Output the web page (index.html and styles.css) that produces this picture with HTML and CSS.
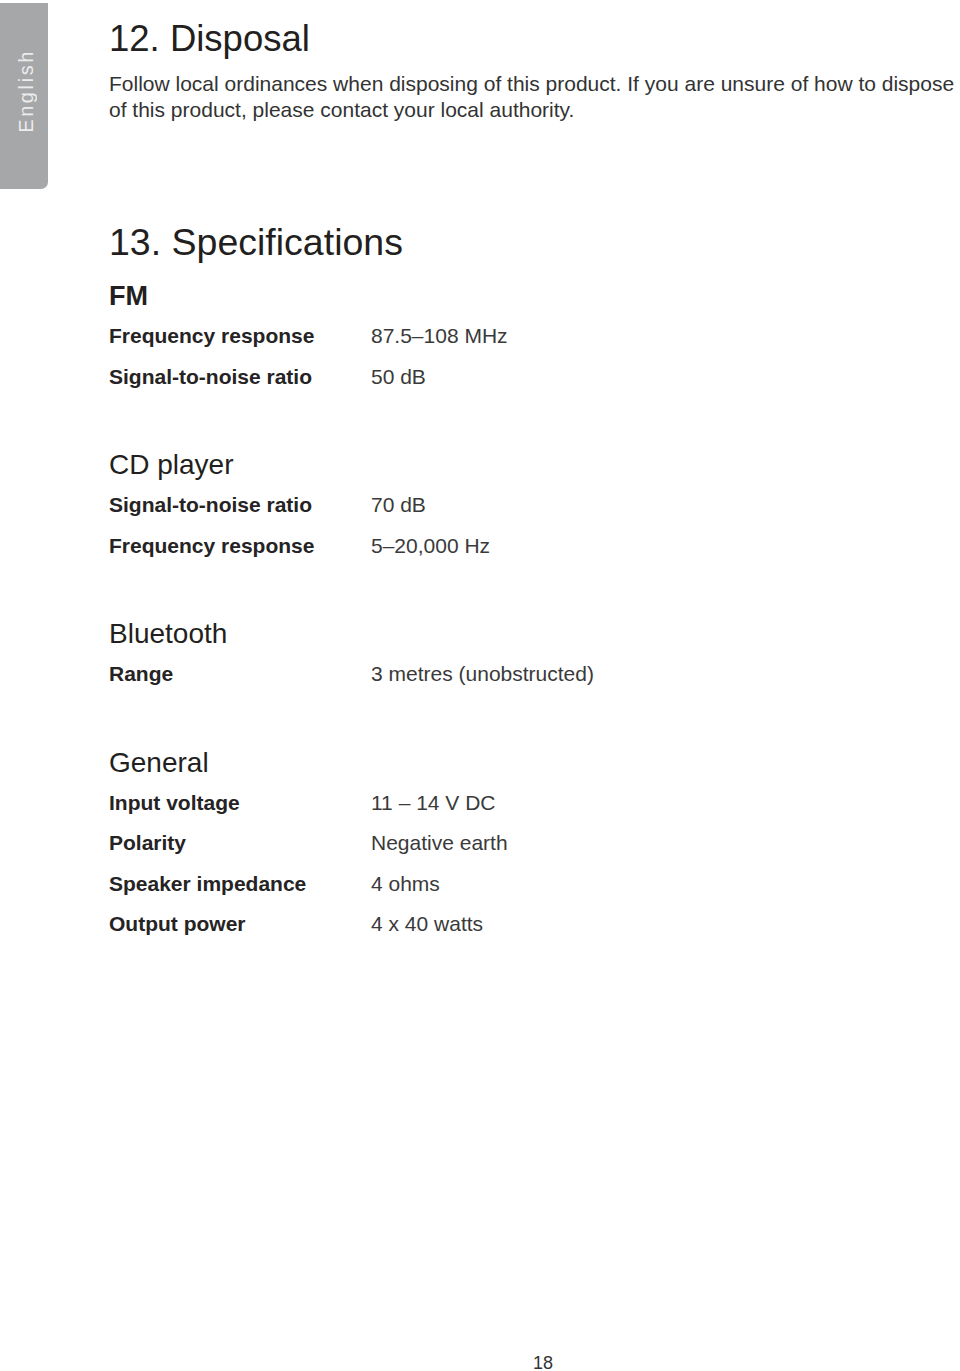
FILE: index.html
```html
<!DOCTYPE html>
<html lang="en">
<head>
<meta charset="utf-8">
<title>Disposal and Specifications</title>
<link rel="stylesheet" href="styles.css">
</head>
<body>
<div class="page">
  <div class="layout">
    <aside class="tab"><span class="tab-label">English</span></aside>
    <main class="content">
      <section class="disposal">
        <h1 class="title">12. Disposal</h1>
        <p class="para">Follow local ordinances when disposing of this product. If you are unsure of how to dispose of this product, please contact your local authority.</p>
      </section>
      <section class="specs">
        <h1 class="title">13. Specifications</h1>
        <div class="group">
          <h2 class="group-title group-title-first">FM</h2>
          <dl class="rows">
            <dt>Frequency response</dt><dd>87.5–108 MHz</dd>
            <dt>Signal-to-noise ratio</dt><dd>50 dB</dd>
          </dl>
        </div>
        <div class="group">
          <h2 class="group-title">CD player</h2>
          <dl class="rows">
            <dt>Signal-to-noise ratio</dt><dd>70 dB</dd>
            <dt>Frequency response</dt><dd>5–20,000 Hz</dd>
          </dl>
        </div>
        <div class="group">
          <h2 class="group-title">Bluetooth</h2>
          <dl class="rows">
            <dt>Range</dt><dd>3 metres (unobstructed)</dd>
          </dl>
        </div>
        <div class="group">
          <h2 class="group-title">General</h2>
          <dl class="rows">
            <dt>Input voltage</dt><dd>11 – 14 V DC</dd>
            <dt>Polarity</dt><dd>Negative earth</dd>
            <dt>Speaker impedance</dt><dd>4 ohms</dd>
            <dt>Output power</dt><dd>4 x 40 watts</dd>
          </dl>
        </div>
      </section>
    </main>
  </div>
  <footer class="page-number">18</footer>
</div>
</body>
</html>
```

FILE: styles.css
```css
* { box-sizing: border-box; }
html, body { margin: 0; padding: 0; background: #fff; overflow: hidden; }
body {
  font-family: "Liberation Sans", Arial, sans-serif;
  color: #231f20;
}
.page {
  width: 960px;
  min-height: 1371px;
  display: flex;
  flex-direction: column;
}
.layout {
  display: flex;
  align-items: flex-start;
}
.tab {
  width: 48px;
  height: 186px;
  margin-top: 3px;
  background: #a6a7a9;
  border-bottom-right-radius: 7px;
  display: flex;
  align-items: center;
  justify-content: center;
  padding-bottom: 10px;
  flex-shrink: 0;
}
.tab-label {
  writing-mode: vertical-rl;
  transform: rotate(180deg);
  color: #ececec;
  font-size: 20px;
  letter-spacing: 2.6px;
  margin-left: 4px;
}
.content {
  padding-left: 61px;
  padding-top: 17px;
  flex: 1;
  min-width: 0;
}
.title {
  margin: 0;
  font-weight: normal;
  font-size: 36.5px;
  line-height: 44px;
}
.para {
  margin: 10px 0 0;
  width: 860px;
  font-size: 21px;
  line-height: 26px;
  color: #333;
}
.specs { margin-top: 97px; }
.specs .title { font-size: 37.5px; }
.group { margin-bottom: 48px; }
.group-title {
  margin: 0;
  font-weight: normal;
  font-size: 28px;
  line-height: 40px;
}
.group-title-first {
  font-weight: bold;
  font-size: 27px;
  margin-top: 12px;
}
.rows {
  margin: 0;
  display: grid;
  grid-template-columns: 262px auto;
  grid-auto-rows: 40.5px;
  align-items: center;
  font-size: 21px;
}
.rows dt { font-weight: bold; color: #262324; }
.rows dd { margin: 0; color: #3a3a3a; }
.page-number {
  margin-top: auto;
  text-align: center;
  padding-left: 126px;
  font-size: 18px;
  line-height: 16px;
  color: #333;
}
```
